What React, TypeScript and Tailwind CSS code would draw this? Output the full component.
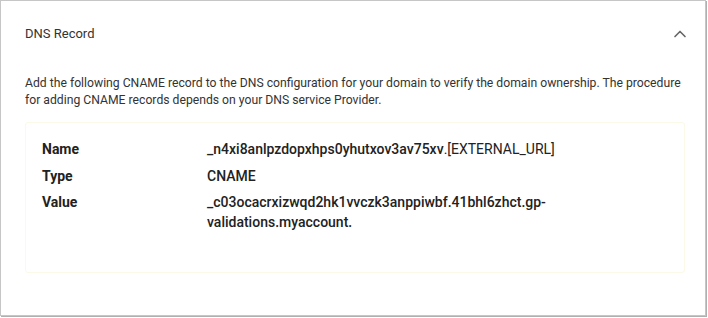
import { ChevronUp } from 'lucide-react'

const rows = [
  { label: 'Name', value: '_n4xi8anlpzdopxhps0yhutxov3av75xv', suffix: '.[EXTERNAL_URL]' },
  { label: 'Type', value: 'CNAME' },
  { label: 'Value', value: '_c03ocacrxizwqd2hk1vvczk3anppiwbf.41bhl6zhct.gp-validations.myaccount.' },
]

export default function App() {
  return (
    <div className="w-[708px] h-[318px] bg-white font-['Roboto',sans-serif]">
      <div className="w-[706px] h-[316px] border border-[#c6c6c6] shadow-[1px_1px_0_#b0b0b0] bg-white flex flex-col">
        <div className="flex items-center justify-between pl-[24px] pr-[15px] pt-[23px]">
          <span className="text-[13px] leading-[18px] text-[#333]">DNS Record</span>
          <ChevronUp size={20} strokeWidth={2} className="text-[#666]" />
        </div>

        <p className="pl-[24px] pr-[14px] mt-[31px] text-[12.2px] leading-[17px] text-[#333]">
          Add the following CNAME record to the DNS configuration for your domain to verify the domain ownership. The
          procedure for adding CNAME records depends on your DNS service Provider.
        </p>

        <div className="ml-[24px] mr-[20px] mt-[13px] h-[151px] rounded-[3px] border border-[#fbf9e8] pl-[16px] pt-[16px] flex flex-col gap-[6.5px]">
          {rows.map((r) => (
            <div key={r.label} className="flex text-[14px] leading-[20px] text-[#222]">
              <div className="w-[165px] shrink-0 font-bold">{r.label}</div>
              <div className="w-[370px] font-medium break-words">
                {r.value}
                {r.suffix && <span className="font-normal">{r.suffix}</span>}
              </div>
            </div>
          ))}
        </div>
      </div>
    </div>
  )
}
